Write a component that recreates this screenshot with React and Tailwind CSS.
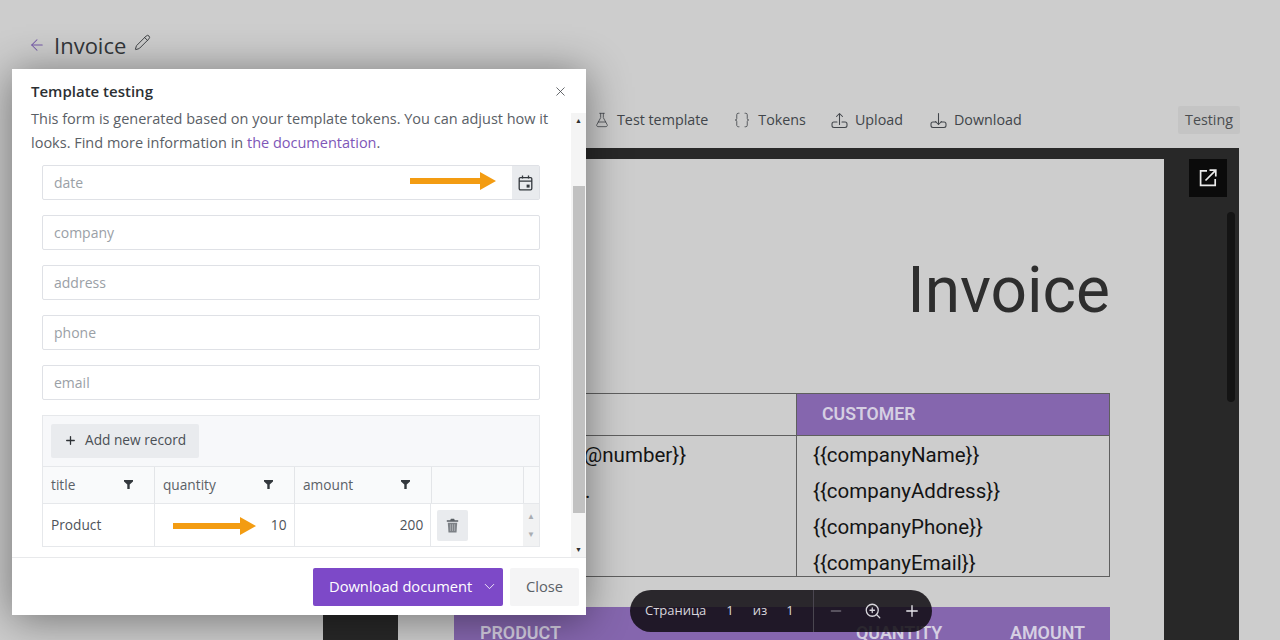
import React from "react";
import { Pencil, ArrowLeft, X, FlaskConical, Braces, Plus, ChevronDown, ZoomIn, Minus } from "lucide-react";

const sans = "font-['Open_Sans','Noto_Sans',sans-serif]";

function Arrow({ w }) {
  return (
    <svg width={w} height="18" viewBox={`0 0 ${w} 18`} className="shrink-0">
      <path d={`M0 6H${w - 16}V0L${w} 9L${w - 16} 18V12H0Z`} fill="#f39c12" />
    </svg>
  );
}

function Funnel() {
  return (
    <svg width="9" height="9" viewBox="0 0 9 9">
      <path d="M0 0H9V1.5L5.7 4.6V9H3.3V4.6L0 1.5Z" fill="#33383d" />
    </svg>
  );
}

function CalendarIcon() {
  return (
    <svg width="15" height="16" viewBox="0 0 15 16" fill="none" stroke="#33383d" strokeWidth="1.3">
      <rect x="1.2" y="2.6" width="12.6" height="12.2" rx="1.2" />
      <path d="M1.2 6.2H13.8M4.5 0.6V3.6M10.5 0.6V3.6" />
      <rect x="8.6" y="9.6" width="3" height="3" fill="#33383d" stroke="none" />
    </svg>
  );
}

function TrashIcon() {
  return (
    <svg width="13" height="15" viewBox="0 0 13 15">
      <path d="M0.8 2.2H4.2L4.9 0.8H8.1L8.8 2.2H12.2V3.8H0.8Z" fill="#5a5f64" />
      <path d="M1.8 4.8H11.2L10.5 14.4H2.5Z" fill="#7d8186" />
      <path d="M4.4 6.2V13M6.5 6.2V13M8.6 6.2V13" stroke="#b9bcc0" strokeWidth="0.7" />
    </svg>
  );
}

function TrayUp() {
  return (
    <svg width="17" height="17" viewBox="0 0 17 17" fill="none" stroke="#41454a" strokeWidth="1.05" strokeLinecap="round" strokeLinejoin="round">
      <path d="M6 10H3a2 2 0 0 0-2 2v1.5a2 2 0 0 0 2 2h11a2 2 0 0 0 2-2V12a2 2 0 0 0-2-2h-3" />
      <path d="M8.5 12.5V1.5M5.5 4.5l3-3 3 3" />
    </svg>
  );
}

function TrayDown() {
  return (
    <svg width="17" height="17" viewBox="0 0 17 17" fill="none" stroke="#41454a" strokeWidth="1.05" strokeLinecap="round" strokeLinejoin="round">
      <path d="M6 10H3a2 2 0 0 0-2 2v1.5a2 2 0 0 0 2 2h11a2 2 0 0 0 2-2V12a2 2 0 0 0-2-2h-3" />
      <path d="M8.5 1.5V12.5M5.5 9.5l3 3 3-3" />
    </svg>
  );
}

function OpenIcon() {
  return (
    <svg width="18" height="18" viewBox="0 0 18 18" fill="none" stroke="#ececec" strokeWidth="1.7">
      <path d="M8 1.8H1.6V16.4H16.2V10" />
      <path d="M10.5 1.2H16.8V7.5M16.6 1.4L6.5 11.5" />
    </svg>
  );
}

function Field({ label, calendar }) {
  return (
    <div className="flex h-[35px] w-[498px] shrink-0 items-stretch rounded-[2px] border border-[#dfe1e6] bg-white">
      <div className="flex flex-1 items-center pl-[11px] text-[14px] text-[#9aa0a6]">{label}</div>
      {calendar && (
        <>
          <div className="flex items-center pb-[3px] pr-[16px]"><Arrow w={86} /></div>
          <div className="flex w-[27px] items-center justify-center bg-[#e9ebee]">
            <CalendarIcon />
          </div>
        </>
      )}
    </div>
  );
}

function Tool({ icon, label, className }) {
  return (
    <div className={`flex items-center gap-[7px] ${className}`}>
      {icon}
      <span>{label}</span>
    </div>
  );
}

function Th({ w, label, funnelAt }) {
  return (
    <div style={{ width: w }} className="relative flex h-full shrink-0 items-center border-r border-[#e3e5e8] pl-[8px] text-[13.7px] text-[#5b6167]">
      <span>{label}</span>
      {funnelAt && <span style={{ left: funnelAt }} className="absolute top-[13px] leading-none"><Funnel /></span>}
    </div>
  );
}

export default function App() {
  return (
    <div className={`relative h-[640px] w-[1280px] overflow-hidden bg-[#cdcdcd] ${sans}`}>
      {/* Page behind the dialog */}
      <div className="flex h-[640px] flex-col">
        <div className="flex h-[90px] items-start pl-[28px] pt-[29px] text-[#33363a]">
          <ArrowLeft size={18} strokeWidth={1.4} className="mt-[7px] text-[#7458a8]" />
          <span className="ml-[8px] text-[22px] leading-[32px]">Invoice</span>
          <Pencil size={17} strokeWidth={1.3} className="ml-[8px] mt-[5px]" />
        </div>
        <div className="flex h-[58px] items-start justify-between pl-[594px] pr-[40px] pt-[16px]">
          <div className="flex h-[28px] items-center text-[14.3px] text-[#41454a]">
            <Tool icon={<FlaskConical size={16} strokeWidth={1.2} />} label="Test template" />
            <Tool className="ml-[25px]" icon={<Braces size={18} strokeWidth={1.1} />} label="Tokens" />
            <Tool className="ml-[25px]" icon={<TrayUp />} label="Upload" />
            <Tool className="ml-[27px]" icon={<TrayDown />} label="Download" />
          </div>
          <div className="flex h-[28px] w-[62px] items-center justify-center rounded-[2px] bg-[#c4c4c4] text-[14.3px] text-[#4a4d50]">Testing</div>
        </div>
        <div className="ml-[323px] mr-[41px] flex flex-1 items-start overflow-hidden bg-[#282828] pl-[75px] pt-[11px]">
          <div className="h-[600px] w-[766px] shrink-0 bg-[#cdcdcd] pl-[56px] pr-[54px] pt-[96px] font-['Roboto',sans-serif] text-[#141414]">
            <div className="h-[138px] text-right text-[64px] font-normal leading-[72px] text-[#2e2e2e]">Invoice</div>
            <div className="flex h-[184px] border border-[#5f5f5f]">
              <div className="flex w-[342px] shrink-0 flex-col border-r border-[#5f5f5f]">
                <div className="h-[42px] shrink-0 border-b border-[#5f5f5f]" />
                <div className="pl-[115px] pt-[1px] text-[20.5px] leading-[36px]">
                  <div>{"{{@number}}"}</div>
                  <div className="pl-[15px]">.</div>
                </div>
              </div>
              <div className="flex min-w-0 flex-1 flex-col">
                <div className="flex h-[41px] shrink-0 items-center bg-[#8566ae] pl-[25px] text-[17.7px] font-semibold text-[#d5cfe2]">CUSTOMER</div>
                <div className="h-[141px] shrink-0 border-t border-[#5f5f5f] pl-[16px] pt-[1px] text-[20.5px] leading-[36px]">
                  <div>{"{{companyName}}"}</div>
                  <div>{"{{companyAddress}}"}</div>
                  <div>{"{{companyPhone}}"}</div>
                  <div>{"{{companyEmail}}"}</div>
                </div>
              </div>
            </div>
            <div className="mt-[30px] flex h-[60px] bg-[#8566ae] pt-[13px] text-[17.9px] font-semibold text-[#d5cfe2]">
              <span className="ml-[26px] w-[376px]">PRODUCT</span>
              <span className="w-[154px]">QUANTITY</span>
              <span>AMOUNT</span>
            </div>
          </div>
          <div className="ml-[25px] flex shrink-0 flex-col items-end">
            <div className="flex h-[38px] w-[38px] items-center justify-center bg-[#0b0b0b]">
              <OpenIcon />
            </div>
            <div className="mr-[-8px] mt-[15px] h-[190px] w-[8px] rounded-full bg-[#141414]" />
          </div>
        </div>
      </div>

      {/* Floating PDF controls */}
      <div className="absolute left-[630px] top-[590px] flex h-[42px] w-[302px] items-center rounded-[21px] bg-[rgba(15,12,18,0.86)] text-[13px] text-[#d8d6dc]">
        <div className="flex h-full w-[184px] items-center border-r border-[#4a4650] pl-[15px]">
          <span>Страница</span>
          <span className="ml-[20px]">1</span>
          <span className="ml-[19px]">из</span>
          <span className="ml-[19px]">1</span>
        </div>
        <Minus size={16} className="ml-[14px] text-[#6b6672]" />
        <ZoomIn size={18} strokeWidth={1.7} className="ml-[20px]" />
        <Plus size={18} strokeWidth={1.8} className="ml-[21px] text-[#e8e6ec]" />
      </div>

      {/* Modal dialog */}
      <div className="absolute left-[12px] top-[69px] flex h-[546px] w-[574px] flex-col bg-white shadow-[0_4px_40px_rgba(0,0,0,0.45)]">
        <div className="flex h-[38px] shrink-0 items-center justify-between pl-[19px] pr-[18px] pt-[6px]">
          <span className="text-[15px] font-semibold text-[#2b2f33]">Template testing</span>
          <X size={15} strokeWidth={1.3} className="text-[#45494e]" />
        </div>
        <div className="flex min-h-0 flex-1">
          <div className="flex min-w-0 flex-1 flex-col overflow-hidden pl-[19px]">
            <p className="pr-[10px] text-[14.5px] leading-[24px] text-[#5a6066]">
              This form is generated based on your template tokens. You can adjust how it looks. Find more information in <span className="text-[#7e57b8]">the documentation</span>.
            </p>
            <div className="ml-[11px] mt-[10px] flex w-[498px] flex-col gap-[15px]">
              <Field label="date" calendar />
              <Field label="company" />
              <Field label="address" />
              <Field label="phone" />
              <Field label="email" />
            </div>
            <div className="ml-[11px] mt-[15px] w-[498px] border border-[#e6e8eb]">
              <div className="flex h-[51px] items-center border-b border-[#e6e8eb] bg-[#f7f8fa] pb-[1px] pl-[8px]">
                <div className="flex h-[34px] w-[148px] items-center rounded-[2px] bg-[#e9ebee] pl-[13px] text-[13.7px] text-[#4a4f55]">
                  <Plus size={13} strokeWidth={2.4} className="text-[#2e3236]" />
                  <span className="ml-[8px]">Add new record</span>
                </div>
              </div>
              <div className="flex h-[37px] border-b border-[#e6e8eb] bg-[#f9fafb]">
                <Th w={112} label="title" funnelAt={81} />
                <Th w={140} label="quantity" funnelAt={109} />
                <Th w={137} label="amount" funnelAt={106} />
                <Th w={92} label="" />
              </div>
              <div className="flex h-[42px] text-[13.7px] text-[#4e5359]">
                <div className="flex w-[112px] items-center border-r border-[#e6e8eb] pl-[8px] pt-[1px]">Product</div>
                <div className="flex w-[140px] items-center justify-end gap-[15px] border-r border-[#e6e8eb] pr-[7px] pt-[1px]">
                  <Arrow w={83} />
                  <span>10</span>
                </div>
                <div className="flex w-[137px] items-center justify-end border-r border-[#e6e8eb] pr-[7px] pt-[1px]">200</div>
                <div className="flex w-[92px] items-center pl-[6px] pt-[1px]">
                  <div className="flex h-[31px] w-[31px] items-center justify-center rounded-[2px] bg-[#e9ebee]">
                    <TrashIcon />
                  </div>
                </div>
                <div className="flex w-[16px] flex-col items-center justify-between bg-[#f1f2f3] py-[8px] text-[8px] leading-none text-[#a9adb2]">
                  <span>▲</span>
                  <span>▼</span>
                </div>
              </div>
            </div>
          </div>
          <div className="mt-[6px] flex w-[15px] shrink-0 flex-col items-center bg-[#f4f4f4] text-[7px] leading-none text-[#303030]">
            <span className="mt-[4px]">▲</span>
            <div className="mt-[62px] h-[327px] w-[12px] bg-[#c1c1c1]" />
            <span className="mt-auto mb-[4px]">▼</span>
          </div>
        </div>
        <div className="flex h-[58px] shrink-0 items-center justify-end gap-[7px] border-t border-[#e8e9eb] pr-[7px]">
          <div className="flex h-[38px] w-[190px] items-center rounded-[2px] bg-[#7d49c8] pl-[16px] text-[14.7px] whitespace-nowrap text-white">
            <span>Download document</span>
            <ChevronDown size={17} strokeWidth={1.2} className="ml-[9px]" />
          </div>
          <div className="flex h-[38px] w-[69px] items-center justify-center rounded-[2px] bg-[#f4f4f5] text-[14.7px] text-[#5b6167]">Close</div>
        </div>
      </div>
    </div>
  );
}
